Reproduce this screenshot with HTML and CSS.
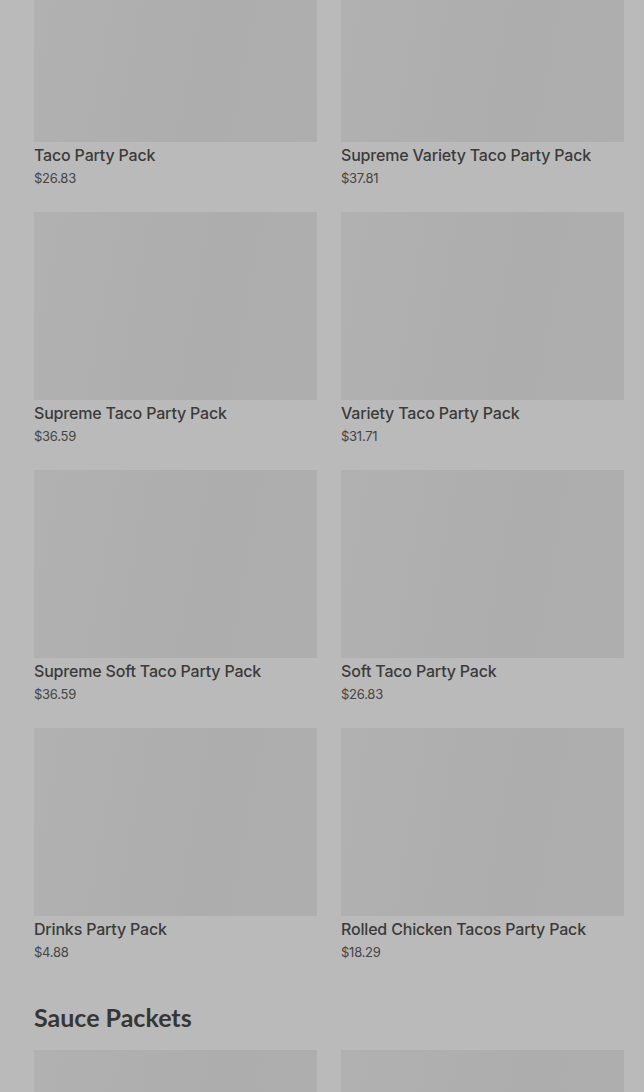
FILE: index.html
```html
<!DOCTYPE html>
<html>
<head>
<meta charset="utf-8">
<link rel="stylesheet" href="styles.css">
</head>
<body>
<main class="page">
  <section class="grid first">
    <div class="card"><div class="img"></div><div class="title">Taco Party Pack</div><div class="price">$26.83</div></div>
    <div class="card"><div class="img"></div><div class="title">Supreme Variety Taco Party Pack</div><div class="price">$37.81</div></div>
    <div class="card"><div class="img"></div><div class="title">Supreme Taco Party Pack</div><div class="price">$36.59</div></div>
    <div class="card"><div class="img"></div><div class="title">Variety Taco Party Pack</div><div class="price">$31.71</div></div>
    <div class="card"><div class="img"></div><div class="title">Supreme Soft Taco Party Pack</div><div class="price">$36.59</div></div>
    <div class="card"><div class="img"></div><div class="title">Soft Taco Party Pack</div><div class="price">$26.83</div></div>
    <div class="card"><div class="img"></div><div class="title">Drinks Party Pack</div><div class="price">$4.88</div></div>
    <div class="card"><div class="img"></div><div class="title">Rolled Chicken Tacos Party Pack</div><div class="price">$18.29</div></div>
  </section>
  <h2 class="section-title">Sauce Packets</h2>
  <section class="grid">
    <div class="card"><div class="img"></div></div>
    <div class="card"><div class="img"></div></div>
  </section>
</main>
</body>
</html>
```
FILE: styles.css
```css
html, body {
  margin: 0;
  padding: 0;
  background: #bababa;
  overflow: hidden;
}
.page {
  padding: 0 20px 0 34px;
  font-family: Inter, Roboto, "Noto Sans", sans-serif;
}
.grid {
  display: grid;
  grid-template-columns: 283px 283px;
  column-gap: 24px;
  row-gap: 24px;
}
.grid.first {
  margin-top: -46px;
}
.img {
  height: 188px;
  background: linear-gradient(100deg, #b1b1b1 0%, #adadad 60%, #aeaeae 100%);
}
.title {
  font-size: 16px;
  line-height: 22px;
  margin-top: 2px;
  color: #3b3b3b;
  font-weight: 500;
  letter-spacing: -0.18px;
}
.price {
  font-size: 13px;
  line-height: 20px;
  margin-top: 2px;
  color: #454545;
  letter-spacing: -0.25px;
}
.section-title {
  margin: 40px 0 18px;
  font-family: Lato, "Open Sans", sans-serif;
  font-weight: 700;
  font-size: 25px;
  line-height: 30px;
  color: #363636;
}
```
